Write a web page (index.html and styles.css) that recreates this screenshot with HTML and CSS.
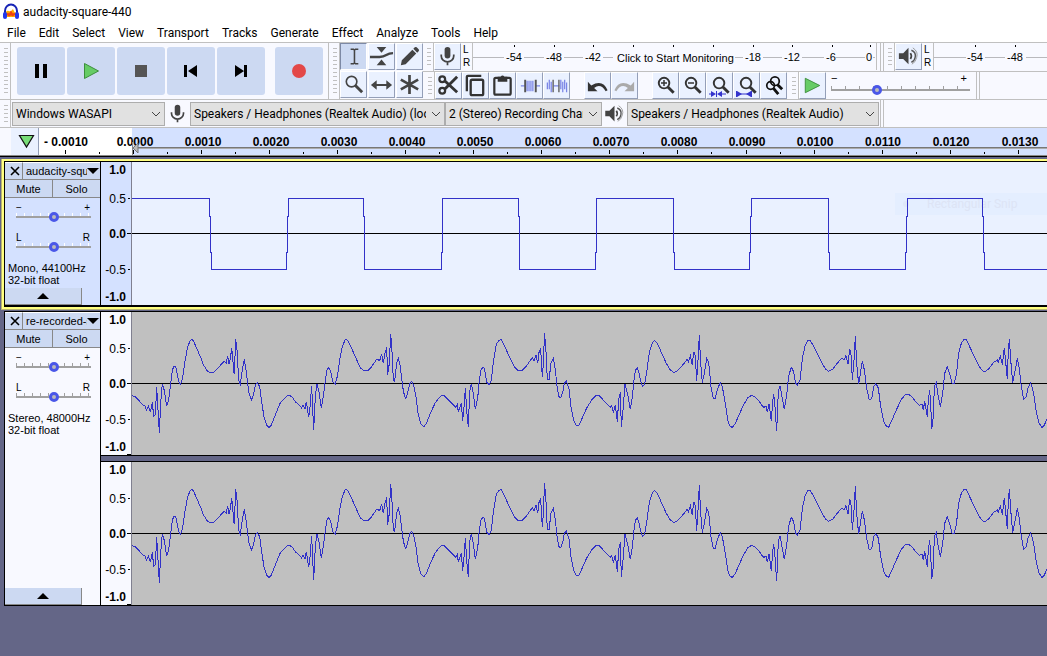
FILE: index.html
```html
<!DOCTYPE html>
<html lang="en">
<head>
<meta charset="utf-8">
<title>audacity-square-440</title>
<link rel="stylesheet" href="styles.css">
</head>
<body>
<svg class="defs" width="0" height="0" aria-hidden="true">
  <symbol id="mic" viewBox="0 0 26 26">
    <rect x="10" y="3" width="6" height="12" rx="3" fill="#444"/>
    <path d="M6.500 11v1.500a6.500 6 0 0 0 13 0V11M13 18.500V22" fill="none" stroke="#444" stroke-width="1.800"/>
  </symbol>
  <symbol id="speaker" viewBox="0 0 26 26">
    <path d="M3 9.500h4.500L13 4v17l-5.500-5.500H3z" fill="#444"/>
    <path d="M15 9.500q2 3 0 6" fill="none" stroke="#444" stroke-width="1.800"/>
    <path d="M16 6.500q5 2 4 7-.5 4-4 5.500" fill="none" stroke="#555" stroke-width="1.500"/>
    <path d="M17.500 4q6 4 4 10-1 5-5 7" fill="none" stroke="#999" stroke-width="1"/>
  </symbol>
  <symbol id="lens" viewBox="0 0 26 26">
    <circle cx="11.500" cy="10.500" r="5.500" fill="none" stroke="#333" stroke-width="2"/>
    <path d="M15.500 14.500l6 6" stroke="#333" stroke-width="3"/>
  </symbol>
  <symbol id="chevron" viewBox="0 0 10 6"><path d="M1 1l4 4 4-4" fill="none" stroke="#444"/></symbol>
  <symbol id="recording" overflow="visible">
    <g transform="scale(.33333)" class="wave">
      <polyline vector-effect="non-scaling-stroke" transform="translate(-6 24)" points="6,227 14,229 20,234 28,243 38,254 45,258 50,271 55,258 61,277 67,247 71,289 76,285 80,202 88,338 92,250 97,191 103,212 110,259 116,238 122,190 127,152 131,139 137,139 142,165 147,187 152,193 158,172 164,130 172,85 180,62 185,58 190,62 200,85 212,112 220,134 232,153 242,158 252,156 262,146 272,135 282,124 289,129 293,108 297,132 301,118 305,84 308,110 311,157 313,163 317,58 321,90 326,180 331,193 337,150 343,118 349,155 356,215 364,241 371,222 376,195 382,188 389,200 394,240 402,290 410,315 417,322 424,315 436,285 450,250 465,234"/>
      <polyline vector-effect="non-scaling-stroke" transform="translate(459 24)" points="0,234 8,227 14,226 22,232 32,246 44,256 50,265 54,254 60,268 64,245 71,292 75,262 80,198 86,331 91,230 96,191 102,215 109,265 114,235 120,190 125,152 131,142 137,155 143,185 151,192 158,165 164,120 172,80 180,60 184,58 190,64 200,85 214,117 226,143 236,152 248,152 258,143 268,128 276,117 284,122 290,102 295,130 300,100 305,82 308,164 313,130 317,42 320,75 325,180 329,184 335,130 340,115 346,140 353,200 359,230 363,235 368,218 374,192 380,184 386,196 393,230 400,285 408,312 417,320 424,310 436,280 450,250"/>
      <polyline vector-effect="non-scaling-stroke" transform="translate(909 24)" points="0,250 10,236 20,226 28,227 38,237 50,249 62,262 67,254 70,275 79,250 83,302 88,250 91,205 95,270 100,322 104,215 109,191 115,222 121,268 128,235 133,180 138,150 143,142 148,144 155,186 163,194 169,180 175,125 184,73 192,61 198,58 204,69 214,90 226,116 240,143 250,152 262,151 272,141 282,127 292,113 297,122 303,104 308,130 312,98 317,88 322,172 326,120 328,40 332,75 337,180 342,180 348,130 355,115 361,150 367,207 372,230 377,233 383,218 388,190 394,182 402,207 408,260 416,302 424,318 430,318 440,298 454,266 470,240 482,227 492,227 502,237 514,250 526,262 530,256 535,278 541,256 547,305 551,240 556,217 559,322 565,260 570,193 578,222 586,268 592,230 598,170 602,150 607,145 612,158 615,175"/>
      <polyline vector-effect="non-scaling-stroke" transform="translate(1524 24)" points="0,175 7,199 14,193 21,150 28,97 37,68 44,62 52,70 64,97 78,128 90,149 102,158 112,153 124,140 134,128 141,118 145,126 151,108 157,136 161,95 166,108 170,182 174,120 178,46 182,130 187,188 194,155 200,115 206,126 213,200 220,236 226,236 232,208 241,188 247,200 256,250 263,300 270,319 277,322 286,310 298,283 312,252 324,233 334,226 344,230 356,241 366,257 372,262 378,258 382,276 387,252 394,302 398,245 401,222 405,260 410,334 415,215 420,197 427,235 433,268 440,225 446,168 454,142 461,155 467,190 472,195 480,180 488,110 496,75 504,62 511,62 520,77 534,104 548,134 558,148 566,154 578,148 590,132 600,120 606,115"/>
      <polyline vector-effect="non-scaling-stroke" transform="translate(2130 24)" points="0,115 6,120 12,107 18,133 23,86 28,108 31,180 36,120 40,48 44,130 50,193 56,155 61,122 67,150 74,205 82,240 89,236 96,198 102,191 109,204 116,260 126,307 134,320 140,322 150,300 164,268 178,238 190,224 200,223 210,230 222,246 232,256 240,252 244,270 248,244 256,292 259,240 263,210 266,250 269,328 274,290 277,200 283,188 288,225 295,260 302,220 308,160 316,140 324,165 330,189 336,192 343,165 350,100 358,70 366,58 374,60 382,78 398,112 412,140 422,153 430,154 440,147 454,128 466,120 469,126 475,109 481,134 487,83 491,125 496,178 499,90 502,58 507,130 512,188 518,160 526,115 532,145 538,200 545,238 552,232 558,205 566,189 574,215 582,270 590,307 600,323 607,315 615,297"/>
    </g>
  </symbol>
</svg>

<header class="titlebar">
  <svg width="18" height="18" viewBox="0 0 18 18" aria-hidden="true">
    <path d="M4 9q1-2 3-1t3-1 2 1 2 1v5H4z" fill="#ffb000"/>
    <path d="M4 11.500l2-2 1 1 2-3 2 3 1-1 2 2-2 1-1 1-2-1-2 1z" fill="#f04410"/>
    <path d="M3 11V8a6 6.500 0 0 1 12 0v3" fill="none" stroke="#1724b5" stroke-width="2"/>
    <rect x="1" y="9" width="4" height="7" rx="2" fill="#2337ea"/>
    <rect x="13" y="9" width="4" height="7" rx="2" fill="#2337ea"/>
  </svg>
  <span>audacity-square-440</span>
</header>
<nav class="menubar">
  <button>File</button><button>Edit</button><button>Select</button><button>View</button><button>Transport</button><button>Tracks</button><button>Generate</button><button>Effect</button><button>Analyze</button><button>Tools</button><button>Help</button>
</nav>

<section class="toolbars">
  <div class="transport">
    <i class="grip"></i>
    <div class="transport-buttons">
      <button aria-label="Pause"><svg width="48" height="48"><path d="M18 17h4v14h-4zM26 17h4v14h-4z"/></svg></button>
      <button aria-label="Play"><svg width="48" height="48"><path d="M17.500 16.500v15l14-7.500z" fill="#66cc66" stroke="#3d8f3d"/></svg></button>
      <button aria-label="Stop"><svg width="48" height="48"><path d="M18 18h12v12H18z" fill="#555"/></svg></button>
      <button aria-label="Skip to Start"><svg width="48" height="48"><path d="M17 18h3v12h-3zM30 18v12l-9-6z"/></svg></button>
      <button aria-label="Skip to End"><svg width="48" height="48"><path d="M27 18h3v12h-3zM18 18v12l9-6z"/></svg></button>
      <button class="record" aria-label="Record"><svg width="48" height="48"><circle cx="24" cy="24" r="7" fill="#e34848"/></svg></button>
    </div>
  </div>

  <div class="tools">
    <i class="grip"></i>
    <div class="tool-grid">
      <button class="tool active" aria-label="Selection Tool"><svg viewBox="0 0 26 26"><path d="M10 5.500h3l1 1 1-1h3M14 6v14M10 20.500h3l1-1 1 1h3" fill="none" stroke="#444" stroke-width="1.600"/></svg></button>
      <button class="tool" aria-label="Envelope Tool"><svg viewBox="0 0 26 26"><path d="M8 3h10l-5 6zM8 22h10l-5-6z" fill="#444"/><path d="M1 13.500h10q4 0 7-2t7-2" fill="none" stroke="#444" stroke-width="2.500"/></svg></button>
      <button class="tool" aria-label="Draw Tool"><svg viewBox="0 0 26 26"><path d="M4 22l1-5L16 6l4 4L9 21zM17 5l1.500-1.500q1-1 2 0l2 2q1 1 0 2L21 9z" fill="#444"/></svg></button>
      <button class="tool" aria-label="Zoom Tool"><svg viewBox="0 0 26 26"><circle cx="11" cy="10" r="5.500" fill="none" stroke="#444" stroke-width="1.700"/><path d="M15 14l7 7" stroke="#444" stroke-width="3"/></svg></button>
      <button class="tool" aria-label="Time Shift Tool"><svg viewBox="0 0 26 26"><path d="M2 13.500l6-5v4h10v-4l6 5-6 5v-4H8v4z" fill="#444"/></svg></button>
      <button class="tool" aria-label="Multi-Tool"><svg viewBox="0 0 26 26"><path d="M13 3v20M4 8l18 10M22 8L4 18" stroke="#444" stroke-width="2.800"/></svg></button>
    </div>
  </div>

  <div class="bars">
    <div class="bar">
      <i class="grip"></i>
      <button class="tool" aria-label="Recording level"><svg><use href="#mic"/></svg></button>
      <div class="lr"><span>L</span><span>R</span></div>
      <svg class="meter rec" role="img" aria-label="Recording meter">
        <path d="M41.500 2v2M81.500 2v2M120.500 2v2M160.500 2v2M200.500 2v2M240.500 2v2M280.500 2v2M319.500 2v2M359.500 2v2M397.500 2v2" stroke="#000"/>
        <path d="M0 14.500h402" stroke="#b9b9bd"/>
        <g class="mask"><rect x="31" y="8" width="20" height="12"/><rect x="71" y="8" width="20" height="12"/><rect x="110" y="8" width="20" height="12"/><rect x="140" y="5" width="122" height="19"/><rect x="270" y="8" width="20" height="12"/><rect x="309" y="8" width="20" height="12"/><rect x="351" y="8" width="12" height="12"/><rect x="392" y="8" width="8" height="12"/></g>
        <g font-size="11" text-anchor="middle"><text x="41" y="18">-54</text><text x="81" y="18">-48</text><text x="120" y="18">-42</text><text x="280" y="18">-18</text><text x="319" y="18">-12</text><text x="358" y="18">-6</text><text x="396" y="18">0</text></g>
        <text x="144" y="19" font-size="11">Click to Start Monitoring</text>
      </svg>
      <i class="end"></i>
      <i class="grip"></i>
      <button class="tool" aria-label="Playback level"><svg><use href="#speaker"/></svg></button>
      <div class="lr"><span>L</span><span>R</span></div>
      <svg class="meter play" role="img" aria-label="Playback meter">
        <path d="M41.500 2v2M81.500 2v2" stroke="#000"/>
        <path d="M0 14.500h32M51 14.500h20M92 14.500h40" stroke="#b9b9bd"/>
        <g font-size="11" text-anchor="middle"><text x="41" y="18">-54</text><text x="81" y="18">-48</text></g>
      </svg>
    </div>
    <div class="bar edit">
      <i class="grip"></i>
      <div class="group">
        <button class="tool" aria-label="Cut"><svg viewBox="0 0 26 26"><g fill="none" stroke="#333" stroke-width="2.300"><circle cx="6.500" cy="6.500" r="3"/><circle cx="6.500" cy="18.500" r="3"/><path d="M9 8l13 12M9 17L22 4" stroke-width="3"/></g></svg></button>
        <button class="tool" aria-label="Copy"><svg viewBox="0 0 26 26"><g fill="none" stroke="#333" stroke-width="2.400"><rect x="8" y="7" width="13" height="16" rx="1.500"/><path d="M4 19V4q0-1 1-1h14"/></g></svg></button>
        <button class="tool" aria-label="Paste"><svg viewBox="0 0 26 26"><rect x="4.500" y="5" width="17" height="17.500" rx="1.500" fill="none" stroke="#333" stroke-width="2.300"/><path d="M8 4h3q2-3 4 0h3v5H8z" fill="#333"/></svg></button>
        <button class="tool" aria-label="Trim"><svg viewBox="0 0 26 26"><path d="M4 13.500h5M19 13.500h5M10.500 8v11M12.500 8v11M14.500 8v11M16.500 8v11" stroke="#7a85e6" fill="none" stroke-width="1.300"/><path d="M8.500 7v13M19.500 7v13" stroke="#555" stroke-width="2"/></svg></button>
        <button class="tool" aria-label="Silence"><svg viewBox="0 0 26 26"><path d="M3.500 10v7M5.500 7v10M7.500 9v11M17.500 7v10M19.500 9v11M21.500 7v10M23.500 10v10M10 13.500h6" stroke="#7a85e6" stroke-width="1.300"/><path d="M9.500 7v13M15.500 7v13" stroke="#666" stroke-width="1.500"/></svg></button>
      </div>
      <div class="group">
        <button class="tool" aria-label="Undo"><svg viewBox="0 0 26 26"><path d="M3 9v10h10l-3.500-3.500q7-5 12 3.500l2-1q-5-12-17-5z" fill="#333"/></svg></button>
        <button class="tool" aria-label="Redo"><svg viewBox="0 0 26 26"><path d="M23 9v10H13l3.500-3.500q-7-5-12 3.500l-2-1q5-12 17-5z" fill="#aaa"/></svg></button>
      </div>
      <div class="group">
        <button class="tool" aria-label="Zoom In"><svg><use href="#lens"/><path d="M8 10h6M11 7v6" stroke="#333" stroke-width="1.500"/></svg></button>
        <button class="tool" aria-label="Zoom Out"><svg><use href="#lens"/><path d="M8 10h6" stroke="#333" stroke-width="1.500"/></svg></button>
        <button class="tool" aria-label="Fit Selection"><svg><use href="#lens" x="1"/><path d="M2 21h4M14 21h5" stroke="#3333cc"/><path d="M4 18l5 3-5 3zM15 18l-5 3 5 3z" fill="#3333cc"/><path d="M9.500 18v6" stroke="#3333cc"/></svg></button>
        <button class="tool" aria-label="Fit Project"><svg><use href="#lens" x="1"/><path d="M2.500 18v6M17.500 18v6M6 21h8" stroke="#3333cc"/><path d="M3 18l5 3-5 3zM17 18l-5 3 5 3z" fill="#3333cc"/></svg></button>
        <button class="tool" aria-label="Zoom Toggle"><svg viewBox="0 0 26 26"><g fill="none" stroke="#111" stroke-width="1.800"><circle cx="14.500" cy="8.500" r="4.500"/><circle cx="10" cy="13" r="4"/><path d="M17 12l5 5M13 16l5 6" stroke-width="3"/></g></svg></button>
      </div>
      <i class="grip"></i>
      <button class="tool" aria-label="Play at Speed"><svg viewBox="0 0 26 26"><path d="M5.500 5.500v15l15-7.500z" fill="#66cc66" stroke="#3d8f3d"/></svg></button>
      <div class="speed">
        <div class="ends"><span>−</span><span>+</span></div>
        <input class="slider" type="range" min="0" max="100" value="32" aria-label="Playback speed">
      </div>
      <i class="end"></i>
    </div>
  </div>
</section>

<section class="devices">
  <i class="grip"></i>
  <label class="pick host"><select aria-label="Audio host"><option>Windows WASAPI</option></select><svg><use href="#chevron"/></svg></label>
  <svg class="device-icon mic-icon" aria-hidden="true"><use href="#mic"/></svg>
  <label class="pick input"><select aria-label="Recording device"><option>Speakers / Headphones (Realtek Audio) (loopback)</option></select><svg><use href="#chevron"/></svg></label>
  <label class="pick channels"><select aria-label="Recording channels"><option>2 (Stereo) Recording Channels</option></select><svg><use href="#chevron"/></svg></label>
  <svg class="device-icon" aria-hidden="true"><use href="#speaker"/></svg>
  <label class="pick output"><select aria-label="Playback device"><option>Speakers / Headphones (Realtek Audio)</option></select><svg><use href="#chevron"/></svg></label>
  <i class="end"></i>
</section>

<section class="timeline">
  <button class="pin" aria-label="Pinned play head"><svg width="26" height="26"><path d="M8.500 6.500h14L15.500 18z" fill="#77dd77" stroke="#111" stroke-width="1.200"/></svg></button>
  <svg class="ruler" role="img" aria-label="Timeline">
    <rect x="93" width="100%" height="27" fill="#d4e1ff"/>
    <path d="M99 19.500h2000" stroke="#777"/><path d="M99 20.500h2000" stroke="#aaa"/>
    <path d="M26.500 22v4M94.500 22v4M162.500 22v4M230.500 22v4M298.500 22v4M366.500 22v4M434.500 22v4M502.500 22v4M570.500 22v4M638.500 22v4M707.500 22v4M775.500 22v4M843.500 22v4M911.500 22v4M979.500 22v4M60.500 24v2M128.500 24v2M196.500 24v2M264.500 24v2M332.500 24v2M400.500 24v2M468.500 24v2M536.500 24v2M604.500 24v2M672.500 24v2M741.500 24v2M809.500 24v2M877.500 24v2M945.500 24v2" stroke="#000"/>
    <g font-size="12" font-weight="bold" text-anchor="middle"><text x="27" y="18">- 0.0010</text><text x="96" y="18">0.0000</text><text x="164" y="18">0.0010</text><text x="232" y="18">0.0020</text><text x="300" y="18">0.0030</text><text x="368" y="18">0.0040</text><text x="436" y="18">0.0050</text><text x="504" y="18">0.0060</text><text x="572" y="18">0.0070</text><text x="640" y="18">0.0080</text><text x="708" y="18">0.0090</text><text x="776" y="18">0.0100</text><text x="844" y="18">0.0110</text><text x="912" y="18">0.0120</text><text x="981" y="18">0.0130</text></g>
    <path d="M93.500 14v13" stroke="#888"/><path d="M94 20l5-5v10z" fill="#bbb" stroke="#777"/>
  </svg>
</section>

<main class="tracks">
  <article class="track selected">
    <div class="panel">
      <div class="head"><button class="close" aria-label="Close"><svg width="10" height="10"><path d="M1 1l8 8M9 1L1 9" stroke="#000" stroke-width="1.600"/></svg></button><button class="name"><span>audacity-square-440</span><svg width="12" height="6"><path d="M0 0h12L6 6z"/></svg></button></div>
      <div class="pair"><button>Mute</button><button>Solo</button></div>
      <div class="knob"><div class="ends"><span>−</span><span>+</span></div><input class="slider" type="range" aria-label="Gain"></div>
      <div class="knob"><div class="ends"><span>L</span><span>R</span></div><input class="slider" type="range" aria-label="Pan"></div>
      <p>Mono, 44100Hz<br>32-bit float</p>
      <button class="collapse" aria-label="Collapse"><svg width="12" height="6"><path d="M0 6h12L6 0z"/></svg></button>
    </div>
    <div class="channels-view">
      <div class="channel">
        <svg class="scale" role="img" aria-label="Amplitude"><text class="strong" x="25" y="12">1.0</text><text x="25" y="41">0.5</text><text class="strong" x="25" y="76">0.0</text><text x="25" y="112">-0.5</text><text class="strong" x="25" y="139">-1.0</text><path d="M27 36.500h2M26 71.500h4M27 107.500h2" stroke="#000"/></svg>
        <svg class="clip" role="img" aria-label="Square wave">
          <rect x="763" y="31" width="100%" height="22" fill="#e4eeff"/>
          <circle cx="774" cy="42" r="3" fill="#dfe8f8"/>
          <text class="ghost" x="795" y="46">Rectangular Snip</text>
          <path d="M0 71.500h3000" stroke="#000"/>
          <polyline class="wave" points="0,36.500 77.500,36.500 77.500,54 78.500,54 78.500,90 79.500,90 79.500,107.500 154.500,107.500 154.500,90 155.500,90 155.500,54 156.500,54 156.500,36.500 231.500,36.500 231.500,54 232.500,54 232.500,107.500 309.500,107.500 309.500,90 310.500,90 310.500,36.500 386.500,36.500 386.500,54 387.500,54 387.500,107.500 463.500,107.500 463.500,90 464.500,90 464.500,36.500 541.500,36.500 541.500,90 542.500,90 542.500,107.500 617.500,107.500 617.500,90 618.500,90 618.500,54 619.500,54 619.500,36.500 696.500,36.500 696.500,90 697.500,90 697.500,107.500 773.500,107.500 773.500,90 774.500,90 774.500,54 775.500,54 775.500,36.500 850.500,36.500 850.500,54 851.500,54 851.500,90 852.500,90 852.500,107.500 928.500,107.500"/>
        </svg>
      </div>
    </div>
  </article>
  <article class="track">
    <div class="panel">
      <div class="head"><button class="close" aria-label="Close"><svg width="10" height="10"><path d="M1 1l8 8M9 1L1 9" stroke="#000" stroke-width="1.600"/></svg></button><button class="name"><span>re-recorded-square</span><svg width="12" height="6"><path d="M0 0h12L6 6z"/></svg></button></div>
      <div class="pair"><button>Mute</button><button>Solo</button></div>
      <div class="knob"><div class="ends"><span>−</span><span>+</span></div><input class="slider" type="range" aria-label="Gain"></div>
      <div class="knob"><div class="ends"><span>L</span><span>R</span></div><input class="slider" type="range" aria-label="Pan"></div>
      <p>Stereo, 48000Hz<br>32-bit float</p>
      <button class="collapse" aria-label="Collapse"><svg width="12" height="6"><path d="M0 6h12L6 0z"/></svg></button>
    </div>
    <div class="channels-view">
      <div class="channel">
        <svg class="scale" role="img" aria-label="Amplitude"><text class="strong" x="25" y="12">1.0</text><text x="25" y="41">0.5</text><text class="strong" x="25" y="76">0.0</text><text x="25" y="112">-0.5</text><text class="strong" x="25" y="139">-1.0</text><path d="M27 36.500h2M26 71.500h4M27 107.500h2M26 142.500h4" stroke="#000"/></svg>
        <svg class="clip" role="img" aria-label="Left channel"><path d="M0 71.500h3000" stroke="#000"/><use href="#recording"/></svg>
      </div>
      <div class="channel">
        <svg class="scale" role="img" aria-label="Amplitude"><text class="strong" x="25" y="12">1.0</text><text x="25" y="41">0.5</text><text class="strong" x="25" y="76">0.0</text><text x="25" y="112">-0.5</text><text class="strong" x="25" y="139">-1.0</text><path d="M27 36.500h2M26 71.500h4M27 107.500h2M26 142.500h4" stroke="#000"/></svg>
        <svg class="clip" role="img" aria-label="Right channel"><path d="M0 71.500h3000" stroke="#000"/><use href="#recording"/></svg>
      </div>
    </div>
  </article>
</main>
</body>
</html>
```
FILE: styles.css
```css
* { box-sizing: border-box; }
body {
  margin: 0;
  min-height: 100vh;
  display: flex;
  flex-direction: column;
  overflow: hidden;
  background: #fff;
  color: #000;
  font: 12px "Liberation Sans", Arial, sans-serif;
}
button { margin: 0; padding: 0; border: 0; background: none; color: inherit; font: inherit; }
svg { display: block; flex: none; }
.defs { position: absolute; }

.titlebar, .menubar, .pick select { font-family: Roboto, "Open Sans", sans-serif; font-size: 12px; }
.titlebar { display: flex; align-items: center; gap: 3px; height: 24px; padding-left: 2px; }
.menubar { display: flex; gap: 13px; height: 18px; padding-left: 7px; line-height: 18px; }

/* toolbars */
.toolbars { display: flex; height: 58px; background: #f8f9ff; border-top: 1px solid #c0c0c0; }
.toolbars, .devices { border-bottom: 1px solid #c0c0c0; }
.grip {
  flex: none;
  width: 11px;
  align-self: stretch;
  border: solid #c0c0c0;
  border-width: 0 1px 0 0;
  background: repeating-linear-gradient(#c0c0c0 0 1px, transparent 1px 4px) 4px 5px / 4px calc(100% - 9px) no-repeat;
}
.end { flex: none; width: 4px; align-self: stretch; border: solid #c0c0c0; border-width: 0 1px; }
.transport { display: flex; width: 329px; border-right: 1px solid #c0c0c0; }
.transport-buttons { display: flex; align-items: center; gap: 2px; padding-left: 6px; }
.transport-buttons button { width: 48px; height: 48px; border-radius: 3px; background: #ccd9f2; }
.transport-buttons .record { margin-left: 8px; }
.tools { display: flex; }
.tool-grid { display: grid; grid-template-columns: repeat(3, 27px); grid-auto-rows: 27px; gap: 1px; }
.tool {
  width: 27px;
  height: 27px;
  flex: none;
  background: #eaf1ff;
  border: 1px solid #fff;
  border-right-color: #949fb8;
  border-bottom-color: #949fb8;
}
.tool svg { width: 25px; height: 25px; }
.tool.active { background: #ccd9f2; border-color: #7d89a5 #fff #fff #7d89a5; }
.bars { flex: 1; min-width: 0; }
.bar { display: flex; height: 28px; overflow: hidden; }
.bar + .bar { padding-left: 1px; border-top: 1px solid #c0c0c0; }
.lr { display: flex; flex-direction: column; width: 11px; padding-left: 2px; font-size: 10px; line-height: 13px; }
.meter { height: 27px; border-left: 1px solid #c0c0c0; }
.meter.rec { width: 405px; border-right: 1px solid #c0c0c0; margin-right: 3px; }
.meter.play { flex: 1; }
.mask rect { fill: #f8f9ff; }
.group { display: flex; margin-right: 14px; }
.group:nth-of-type(3) { margin-right: 1px; }
.speed { width: 150px; padding: 0 6px 0 5px; }
.ends { display: flex; justify-content: space-between; padding-right: 3px; font-size: 11px; line-height: 12px; }

.slider {
  display: block;
  width: 100%;
  height: 12px;
  margin: 0;
  appearance: none;
  background:
    linear-gradient(#a0a0a0, #a0a0a0) 0 5px / 100% 2px no-repeat,
    repeating-linear-gradient(90deg, #a0a0a0 0 1px, transparent 1px 14px) 0 2px / 100% 3px no-repeat;
}
.slider::-webkit-slider-thumb {
  appearance: none;
  width: 10px;
  height: 10px;
  border: 3px solid #4a57e8;
  border-radius: 50%;
  background: #bbb;
}

.devices { display: flex; align-items: center; height: 28px; background: #f8f9ff; }
.pick { position: relative; height: 24px; flex: none; }
.pick select {
  appearance: none;
  width: 100%;
  height: 24px;
  padding: 0 18px 0 3px;
  border: 1px solid #adadad;
  border-radius: 0;
  background: #e1e1e1;
  color: #000;
  overflow: hidden;
}
.pick svg { position: absolute; right: 4px; top: 9px; width: 10px; height: 6px; pointer-events: none; }
.host { width: 153px; margin-left: 1px; }
.input { width: 255px; }
.channels { width: 157px; }
.output { width: 252px; margin-right: 1px; }
.device-icon { width: 25px; height: 24px; }

/* timeline */
.timeline { display: flex; height: 28px; padding-left: 11px; border-bottom: 1px solid #888; background: #f8f9ff; }
.pin { width: 28px; height: 27px; border: solid #fff; border-width: 0 1px 0 0; border-right-color: #949fb8; background: #eaf1ff; }
.ruler { flex: 1; height: 27px; background: #fff; }

/* tracks */
.tracks { flex: 1; background: #646687; border-top: 1px solid #000; padding: 5px 0 0 5px; }
.track { display: flex; background: #000; box-shadow: 0 0 0 1px #000; }
.track.selected { margin-bottom: 7px; box-shadow: 0 0 0 1px #000, 0 1px 0 1px #000, 0 0 0 3px #ffff80, 0 1px 0 3px #ffff80, 0 1px 0 4px #b8b470; }
.panel { display: flex; flex-direction: column; width: 95px; flex: none; background: #f8f9ff; font-size: 11px; }
.head, .pair { display: flex; border-bottom: 1px solid #888; }
.head button, .pair button { height: 17px; background: #ccd9f2; }
.head button { border-top: 1px solid #fff; }
.head .close { width: 18px; padding-left: 5px; border-right: 1px solid #888; }
.name { display: flex; align-items: center; width: 77px; padding: 0 1px 0 3px; }
.name span { flex: 1; overflow: hidden; white-space: nowrap; text-align: left; }
.pair button { width: 48px; border-right: 1px solid #888; }
.pair button + button { width: 47px; border-right: 0; }
.knob { height: 30px; padding: 4px 9px 0 11px; }
.knob .ends { height: 9px; padding: 0 1px 0 0; font-size: 10px; }
.knob .slider { background-size: 100% 2px, 100% 3px; background-image: linear-gradient(#a0a0a0, #a0a0a0), repeating-linear-gradient(90deg, #a0a0a0 0 1px, transparent 1px 8px); }
.panel p { margin: 4px 0 0; padding-left: 3px; line-height: 12px; }
.collapse { display: grid; place-items: center; width: 77px; height: 17px; margin-top: auto; border: solid #888; border-width: 0 1px 1px 0; background: #ccd9f2; }
.selected .panel, .selected .scale { background-color: #d4e1ff; }
.selected .knob .slider { background-image: linear-gradient(#a0a0a0, #a0a0a0), repeating-linear-gradient(90deg, #fff 0 1px, transparent 1px 8px); }
.channels-view { flex: 1; min-width: 0; margin-left: 1px; display: grid; gap: 7px; background: linear-gradient(#000 0 144px, #646687 144px 149px, #000 149px); }
.channel { display: flex; height: 143px; overflow: hidden; }
.scale { width: 31px; height: 143px; background: #f8f9ff; border-right: 1px solid #808090; text-anchor: end; }
.strong { font-weight: bold; }
.clip { flex: 1; min-width: 0; height: 143px; background: #c0c0c0; }
.selected .clip { background: #eaf1ff; }
.wave { fill: none; stroke: #3232c8; stroke-width: 1px; shape-rendering: crispEdges; }
.ghost { fill: #dde4f5; font: 12px Roboto, sans-serif; }
```
